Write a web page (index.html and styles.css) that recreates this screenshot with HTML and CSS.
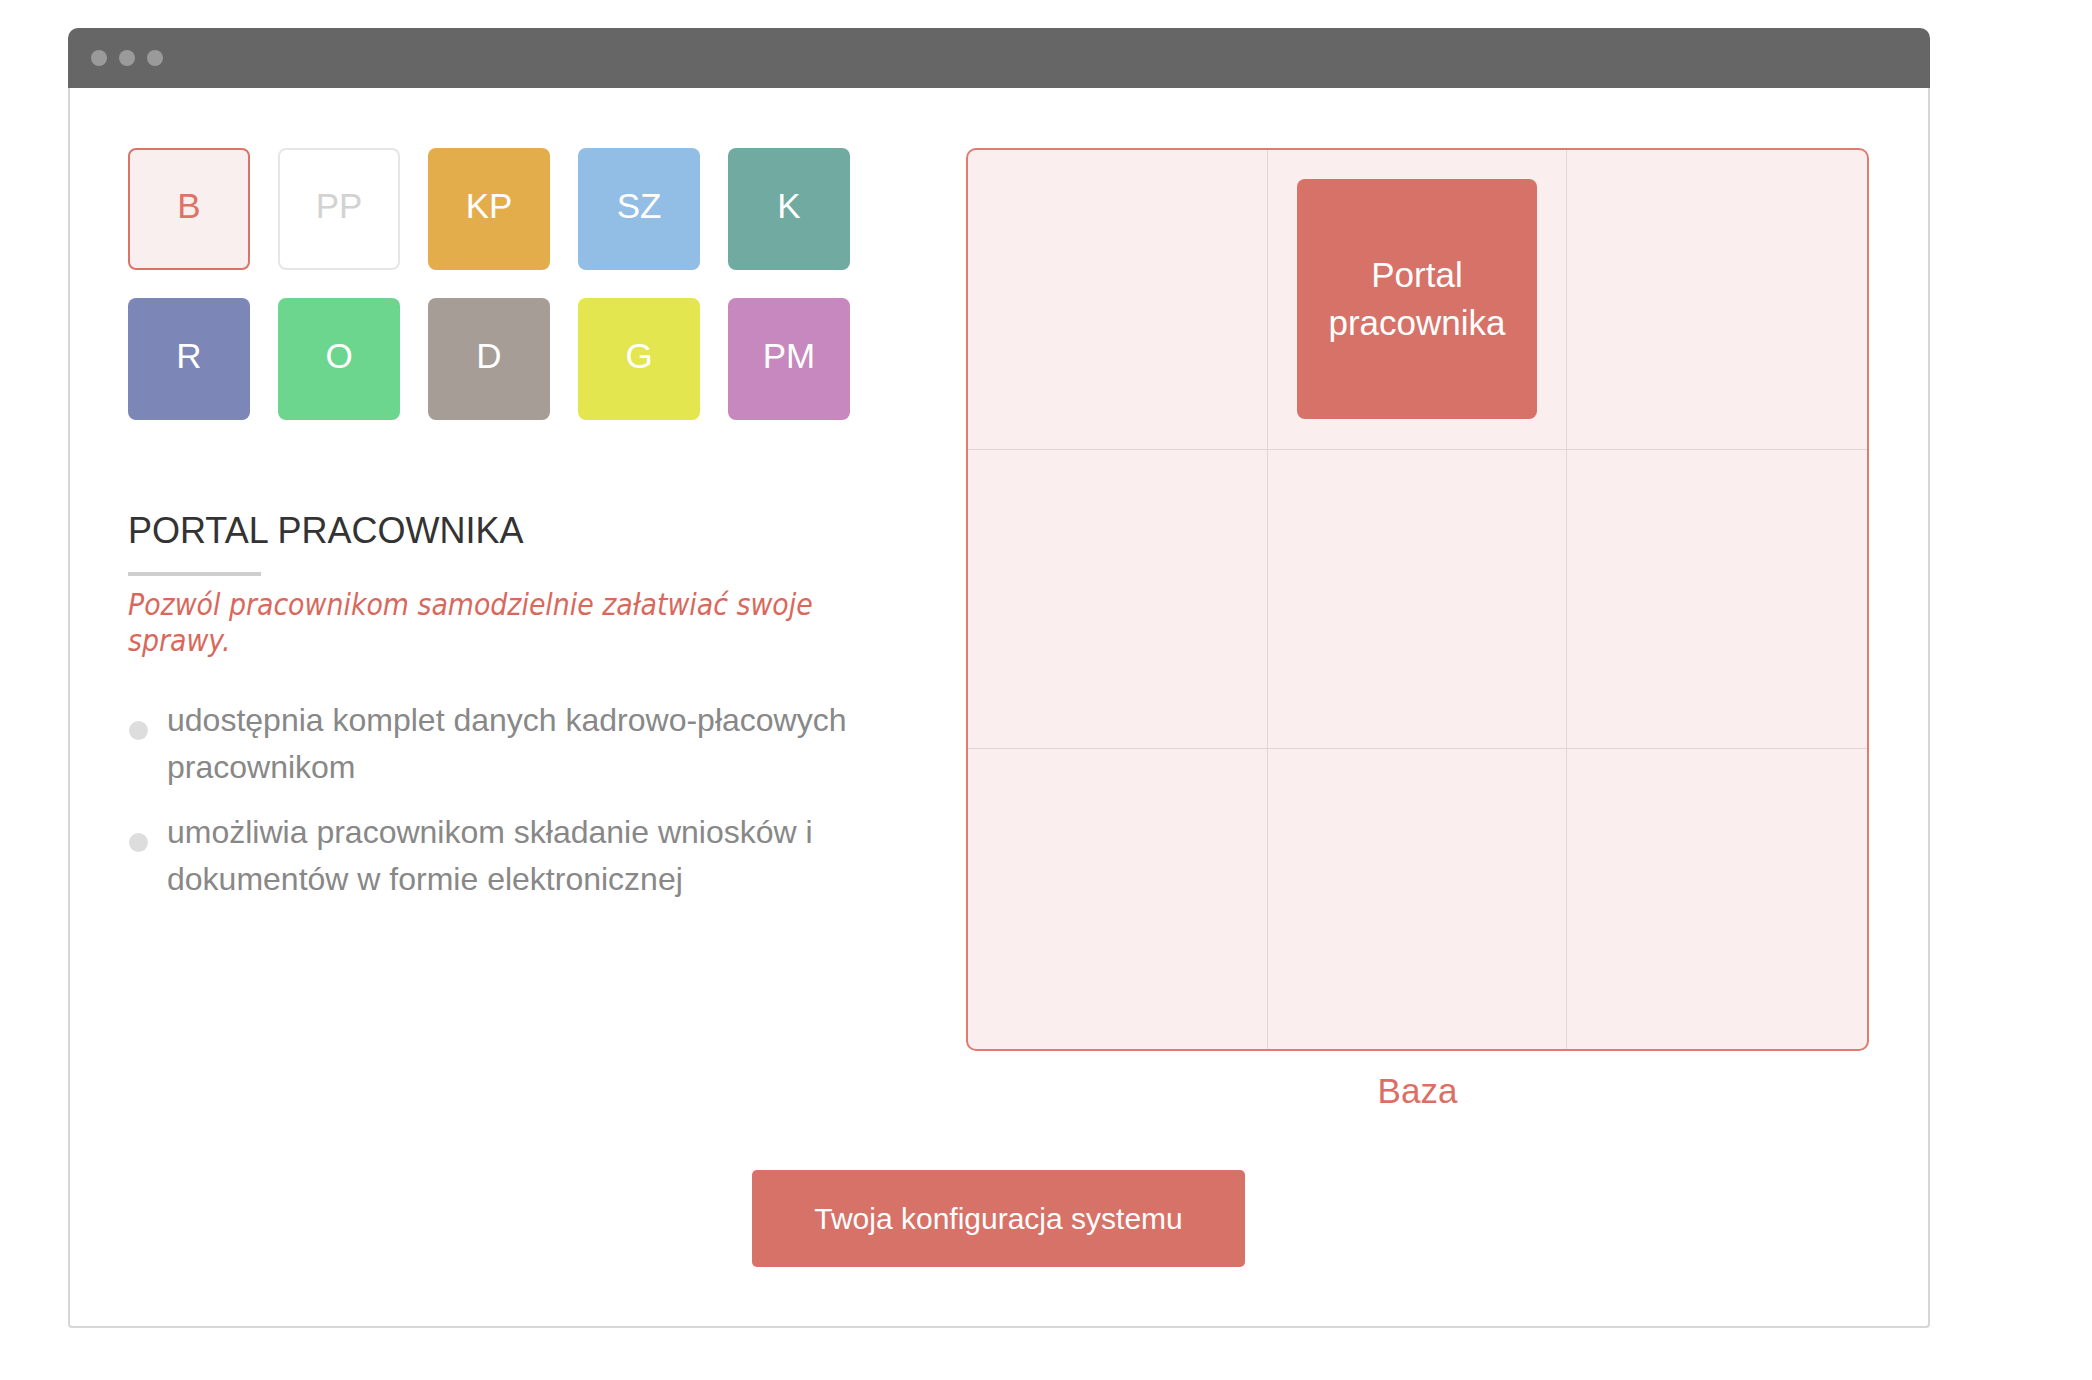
FILE: index.html
```html
<!DOCTYPE html>
<html lang="pl">
<head>
<meta charset="utf-8">
<title>Portal pracownika</title>
<link rel="stylesheet" href="styles.css">
</head>
<body>
<div class="window">
  <div class="titlebar">
    <span class="dot"></span><span class="dot"></span><span class="dot"></span>
  </div>
  <div class="content">
    <div class="main">
      <div class="left">
        <div class="tiles">
          <div class="tile tile-b">B</div>
          <div class="tile tile-pp">PP</div>
          <div class="tile tile-kp">KP</div>
          <div class="tile tile-sz">SZ</div>
          <div class="tile tile-k">K</div>
          <div class="tile tile-r">R</div>
          <div class="tile tile-o">O</div>
          <div class="tile tile-d">D</div>
          <div class="tile tile-g">G</div>
          <div class="tile tile-pm">PM</div>
        </div>
        <h2 class="title">PORTAL PRACOWNIKA</h2>
        <div class="title-bar"></div>
        <p class="lead">Pozwól pracownikom samodzielnie załatwiać swoje sprawy.</p>
        <ul class="features">
          <li>udostępnia komplet danych kadrowo-płacowych pracownikom</li>
          <li>umożliwia pracownikom składanie wniosków i dokumentów w formie elektronicznej</li>
        </ul>
      </div>
      <div class="right">
        <div class="board">
          <div class="cell"></div>
          <div class="cell"><div class="module">Portal pracownika</div></div>
          <div class="cell"></div>
          <div class="cell"></div>
          <div class="cell"></div>
          <div class="cell"></div>
          <div class="cell"></div>
          <div class="cell"></div>
          <div class="cell"></div>
        </div>
        <div class="board-label">Baza</div>
      </div>
    </div>
    <div class="actions">
      <button class="cta">Twoja konfiguracja systemu</button>
    </div>
  </div>
</div>
</body>
</html>
```

FILE: styles.css
```css
html, body {
  margin: 0;
  padding: 0;
  background: #ffffff;
}

body {
  font-family: "Liberation Sans", Arial, Helvetica, sans-serif;
  padding: 28px 0 0 68px;
}

.window {
  width: 1862px;
}

.titlebar {
  height: 60px;
  background: #666666;
  border-radius: 10px 10px 0 0;
  display: flex;
  align-items: center;
  gap: 12px;
  padding-left: 23px;
  box-sizing: border-box;
}

.dot {
  width: 16px;
  height: 16px;
  border-radius: 50%;
  background: #9a9a9a;
}

.content {
  border: 2px solid #d6d6d6;
  border-top: none;
  border-radius: 0 0 4px 4px;
  padding: 60px 59px 59px 58px;
  display: flex;
  flex-direction: column;
}

.main {
  display: flex;
  justify-content: space-between;
}

.left {
  width: 722px;
}

.tiles {
  display: grid;
  grid-template-columns: repeat(5, 122px);
  grid-auto-rows: 122px;
  column-gap: 28px;
  row-gap: 28px;
}

.tile {
  border-radius: 8px;
  display: flex;
  align-items: center;
  justify-content: center;
  box-sizing: border-box;
  color: #ffffff;
  font-size: 35px;
  padding-bottom: 6px;
}

.tile-b { background: #faefef; border: 2px solid #dc7367; color: #dc7367; }
.tile-pp { background: #ffffff; border: 2px solid #e6e6e6; color: #d2d2d2; }
.tile-kp { background: #e3ad4c; }
.tile-sz { background: #92bde4; }
.tile-k { background: #70aaa0; }
.tile-r { background: #7c87b8; }
.tile-o { background: #6cd68f; }
.tile-d { background: #a69d97; }
.tile-g { background: #e3e64f; }
.tile-pm { background: #c787bf; }

.title {
  margin: 91px 0 0 0;
  font-size: 36px;
  line-height: 40px;
  font-weight: normal;
  color: #333333;
}

.title-bar {
  width: 133px;
  height: 4px;
  background: #cfcfcf;
  margin-top: 21px;
}

.lead {
  margin: 11px 0 0 0;
  font-family: "DejaVu Sans Condensed", "DejaVu Sans", sans-serif;
  font-stretch: condensed;
  font-style: italic;
  font-size: 29.8px;
  line-height: 36px;
  color: #d9685c;
}

.features {
  list-style: none;
  margin: 38px 0 0 0;
  padding: 0;
}

.features li {
  display: flex;
  font-size: 32px;
  line-height: 47px;
  color: #888888;
  padding-left: 39px;
  position: relative;
}

.features li + li {
  margin-top: 18px;
}

.features li::before {
  content: "";
  position: absolute;
  left: 1px;
  top: 24px;
  width: 19px;
  height: 19px;
  border-radius: 50%;
  background: #dddddd;
}

.right {
  width: 903px;
  display: flex;
  flex-direction: column;
  align-items: center;
}

.board {
  width: 903px;
  height: 903px;
  box-sizing: border-box;
  border: 2px solid #e07b71;
  border-radius: 10px;
  background: #faefee;
  display: grid;
  grid-template-columns: repeat(3, 1fr);
  grid-template-rows: repeat(3, 1fr);
  overflow: hidden;
}

.cell {
  border-right: 1.5px solid #e3d5d5;
  border-bottom: 1.5px solid #e3d5d5;
  display: flex;
  align-items: center;
  justify-content: center;
}

.cell:nth-child(3n) { border-right: none; }
.cell:nth-child(n+7) { border-bottom: none; }

.module {
  width: 240px;
  height: 240px;
  border-radius: 8px;
  background: #d77268;
  color: #ffffff;
  font-size: 35px;
  line-height: 48px;
  text-align: center;
  display: flex;
  align-items: center;
  justify-content: center;
  padding: 0 20px;
  box-sizing: border-box;
}

.board-label {
  margin-top: 20px;
  font-size: 35px;
  line-height: 40px;
  color: #db6f64;
}

.actions {
  display: flex;
  justify-content: center;
  margin-top: 59px;
}

.cta {
  width: 493px;
  height: 97px;
  border: none;
  border-radius: 5px;
  background: #d77268;
  color: #ffffff;
  font-family: "Liberation Sans", Arial, Helvetica, sans-serif;
  font-size: 30px;
  padding: 0;
  cursor: pointer;
}
```
